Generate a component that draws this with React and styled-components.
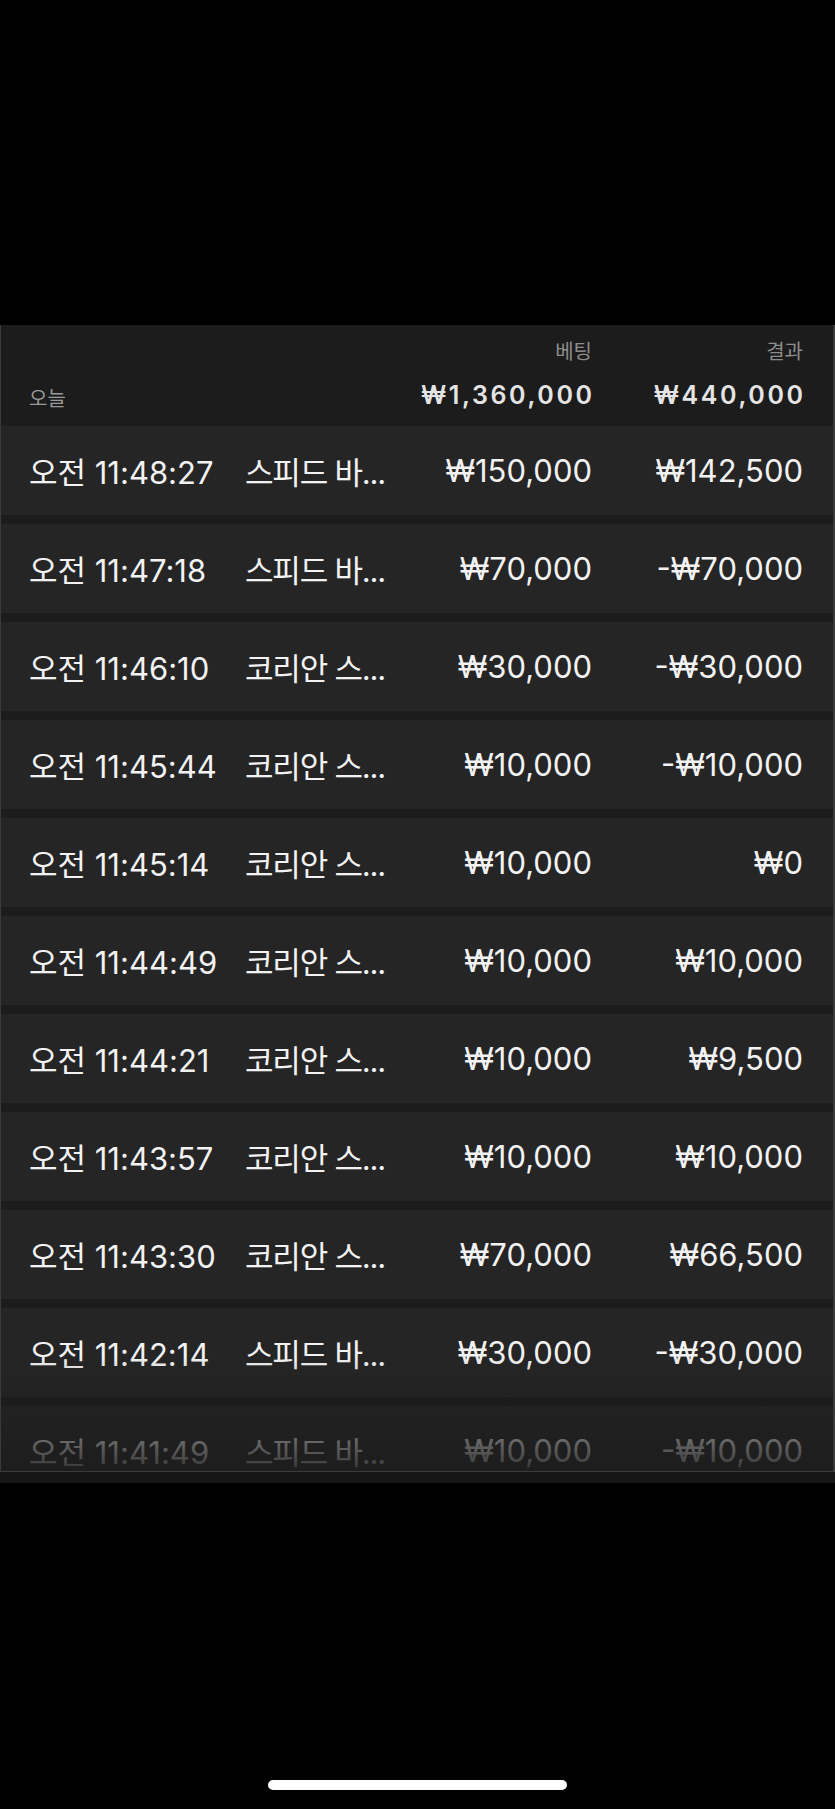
import styled, {createGlobalStyle} from "styled-components";

const GlobalStyle = createGlobalStyle`
  html, body {
    margin: 0;
    padding: 0;
    background: #000000;
  }
  body {
    font-family: Inter, "Noto Sans CJK KR", sans-serif;
    -webkit-font-smoothing: antialiased;
  }
`;

const Screen = styled.div`
  height: 1809px;
  display: flex;
  flex-direction: column;
  background: #000000;
`;

const TopSpace = styled.div`
  height: 325px;
  flex-shrink: 0;
`;

const Panel = styled.div`
  position: relative;
  height: 1147px;
  flex-shrink: 0;
  box-sizing: border-box;
  background: #1c1c1c;
  border-left: 1px solid #3a3a3a;
  border-right: 2px solid #3a3a3a;
  border-bottom: 1px solid #3c3c3c;
  overflow: hidden;
`;

const BottomStrip = styled.div`
  height: 11px;
  flex-shrink: 0;
  background: #151515;
`;

const Spacer = styled.div`
  flex: 1;
`;

const HomeBar = styled.div`
  width: 299px;
  height: 10px;
  border-radius: 5px;
  background: #ffffff;
  margin: 0 auto 19px;
`;

const Grid = styled.div`
  display: grid;
  grid-template-columns: 216px 1fr 200px 211px;
  padding: 0 30px 0 28px;
`;

const Header = styled(Grid)`
  grid-template-rows: 26px 34px;
  row-gap: 15px;
  padding-top: 12px;
  padding-bottom: 14px;
  align-items: center;
`;

const Label = styled.div`
  grid-row: 1;
  grid-column: ${p => p.col};
  text-align: right;
  font-size: 20px;
  color: #8c8c8c;
`;

const Today = styled.div`
  grid-row: 2;
  grid-column: 1;
  font-size: 20px;
  color: #9a9a9a;
  padding-top: 4px;
`;

const Total = styled.div`
  grid-row: 2;
  grid-column: ${p => p.col};
  text-align: right;
  font-size: 25px;
  font-weight: 600;
  letter-spacing: 2.6px;
  margin-right: -2.6px;
  color: #e4e4e4;
`;

const List = styled.div`
  display: flex;
  flex-direction: column;
  gap: 9px;
`;

const Row = styled(Grid)`
  height: 89px;
  align-items: center;
  background: #252525;
  color: #f2f2f2;
  font-size: 31px;
`;

const Cell = styled.div`
  white-space: nowrap;
  text-align: ${p => (p.right ? "right" : "left")};
`;

const GameCell = styled(Cell)`
  letter-spacing: -1.2px;
`;

const Fade = styled.div`
  position: absolute;
  left: 0;
  right: 0;
  bottom: 0;
  height: 115px;
  background: linear-gradient(rgba(28, 28, 28, 0), rgba(28, 28, 28, 0.88));
  pointer-events: none;
`;

const rows = [
    ["오전 11:48:27", "스피드 바...", "₩150,000", "₩142,500"],
    ["오전 11:47:18", "스피드 바...", "₩70,000", "-₩70,000"],
    ["오전 11:46:10", "코리안 스...", "₩30,000", "-₩30,000"],
    ["오전 11:45:44", "코리안 스...", "₩10,000", "-₩10,000"],
    ["오전 11:45:14", "코리안 스...", "₩10,000", "₩0"],
    ["오전 11:44:49", "코리안 스...", "₩10,000", "₩10,000"],
    ["오전 11:44:21", "코리안 스...", "₩10,000", "₩9,500"],
    ["오전 11:43:57", "코리안 스...", "₩10,000", "₩10,000"],
    ["오전 11:43:30", "코리안 스...", "₩70,000", "₩66,500"],
    ["오전 11:42:14", "스피드 바...", "₩30,000", "-₩30,000"],
    ["오전 11:41:49", "스피드 바...", "₩10,000", "-₩10,000"],
];

const App = () => {
    return (
        <Screen>
            <GlobalStyle/>
            <TopSpace/>
            <Panel>
                <Header>
                    <Label col={3}>베팅</Label>
                    <Label col={4}>결과</Label>
                    <Today>오늘</Today>
                    <Total col={3}>₩1,360,000</Total>
                    <Total col={4}>₩440,000</Total>
                </Header>
                <List>
                    {rows.map((item, i) => (
                        <Row key={i}>
                            <Cell>{item[0]}</Cell>
                            <GameCell>{item[1]}</GameCell>
                            <Cell right>{item[2]}</Cell>
                            <Cell right>{item[3]}</Cell>
                        </Row>
                    ))}
                </List>
                <Fade/>
            </Panel>
            <BottomStrip/>
            <Spacer/>
            <HomeBar/>
        </Screen>
    )
}

export default App;
